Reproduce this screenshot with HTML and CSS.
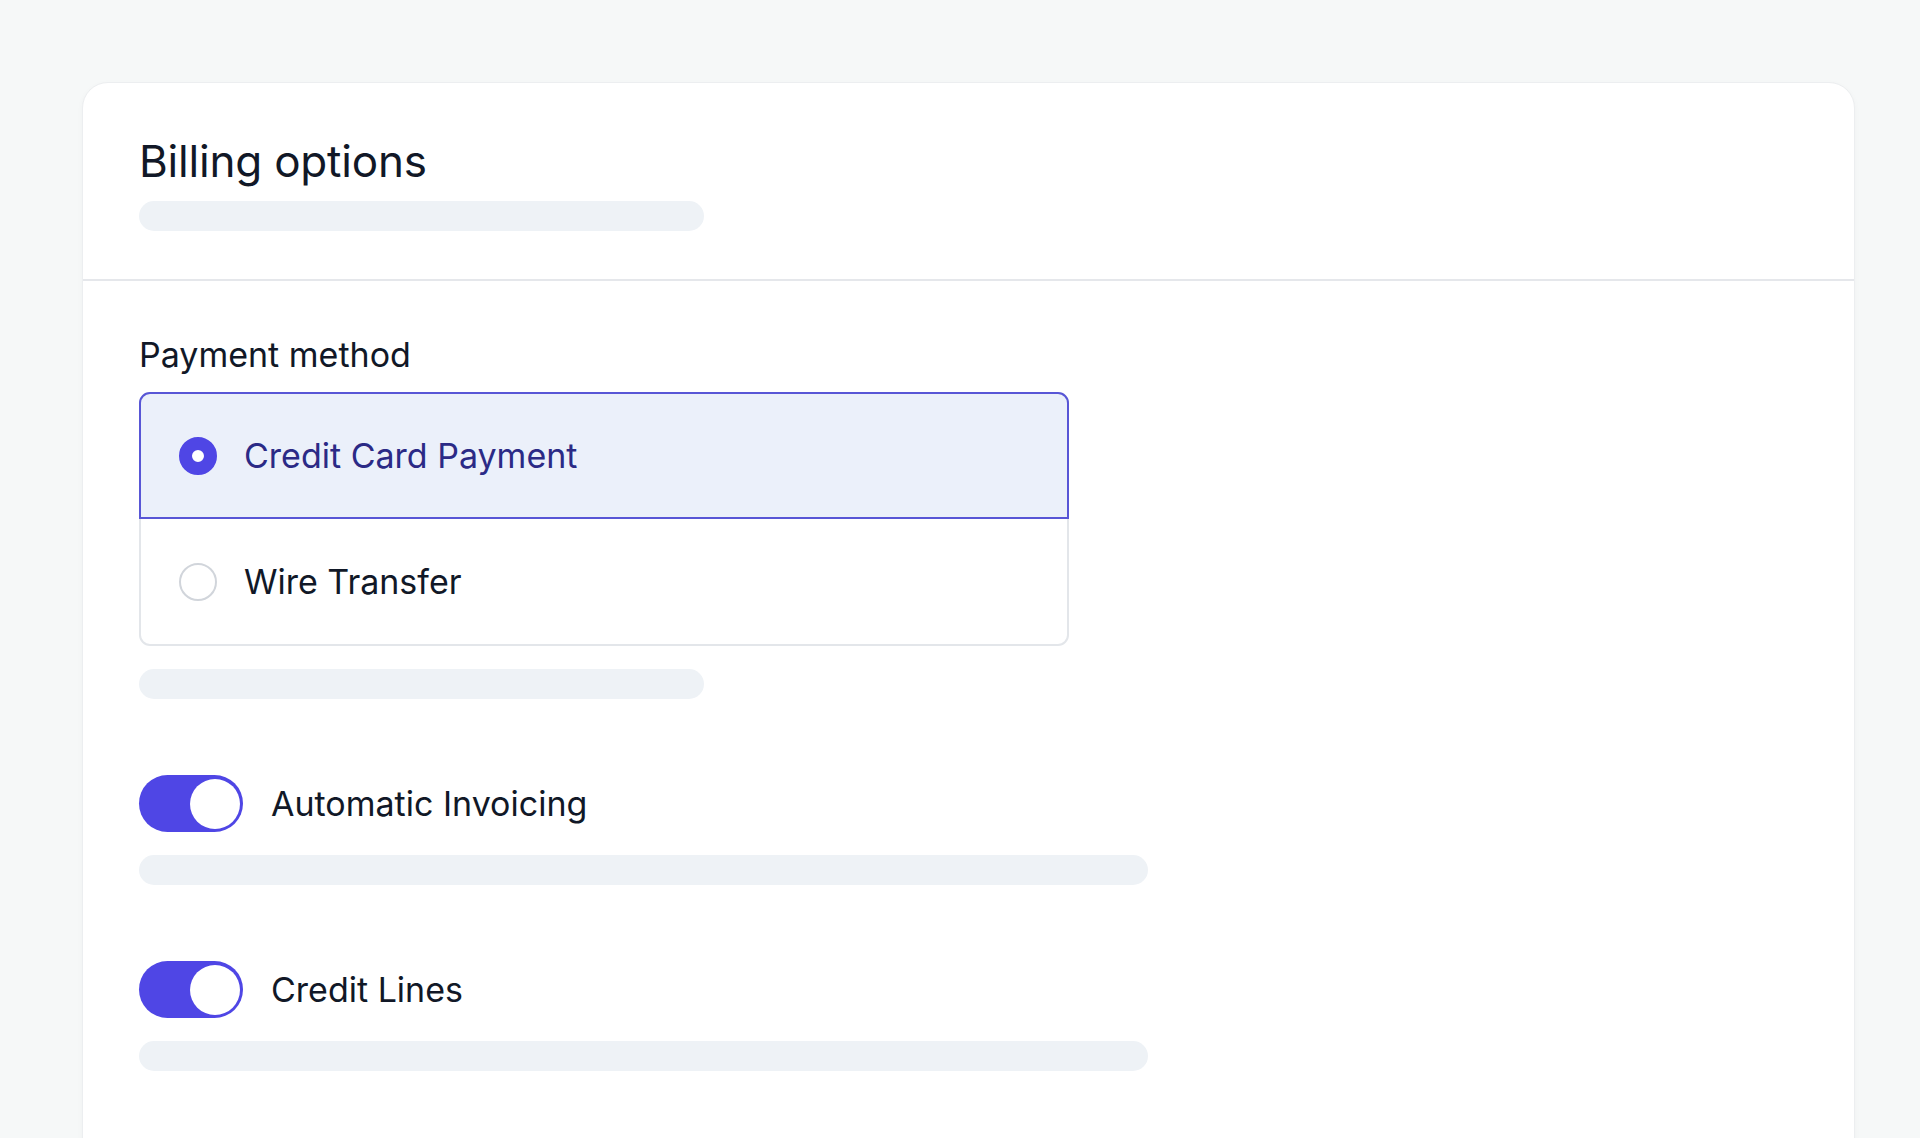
FILE: index.html
```html
<!DOCTYPE html>
<html lang="en">
<head>
    <meta charset="UTF-8">
    <title>Billing options</title>
    <link rel="stylesheet" href="styles.css">
</head>
<body>
    <div class="card">
        <div class="card-header">
            <h1 class="card-title">Billing options</h1>
            <div class="skeleton skeleton-short"></div>
        </div>
        <div class="card-body">
            <div class="field">
                <div class="field-label">Payment method</div>
                <div class="radio-group">
                    <label class="radio-option selected">
                        <span class="radio checked"></span>
                        <span class="radio-text">Credit Card Payment</span>
                    </label>
                    <label class="radio-option">
                        <span class="radio"></span>
                        <span class="radio-text">Wire Transfer</span>
                    </label>
                </div>
                <div class="skeleton skeleton-short"></div>
            </div>

            <div class="field">
                <div class="toggle-row">
                    <span class="toggle on"><span class="toggle-knob"></span></span>
                    <span class="toggle-label">Automatic Invoicing</span>
                </div>
                <div class="skeleton skeleton-long"></div>
            </div>

            <div class="field">
                <div class="toggle-row">
                    <span class="toggle on"><span class="toggle-knob"></span></span>
                    <span class="toggle-label">Credit Lines</span>
                </div>
                <div class="skeleton skeleton-long"></div>
            </div>
        </div>
    </div>
</body>
</html>
```

FILE: styles.css
```css
body {
    margin: 0;
    padding: 82px 65px 0 82px;
    background: #f6f8f8;
    font-family: Inter, "Noto Sans", sans-serif;
    color: #111827;
    height: 100vh;
    box-sizing: border-box;
    overflow: hidden;
}
.card {
    background: #fff;
    border: 1px solid #eceef0;
    border-radius: 26px;
    box-shadow: 0 2px 6px rgba(0, 0, 0, 0.03);
    min-height: 1200px;
}
.card-header {
    padding: 48px 56px 48px;
    border-bottom: 2px solid #e5e7eb;
}
.card-title {
    margin: 0 0 10px;
    font-size: 44px;
    font-weight: 400;
    line-height: 60px;
    letter-spacing: -0.2px;
}
.skeleton {
    height: 30px;
    background: #eef2f6;
    border-radius: 15px;
}
.skeleton-short {
    width: 565px;
}
.skeleton-long {
    width: 1009px;
}
.card-body {
    padding: 50px 56px;
    display: flex;
    flex-direction: column;
    gap: 76px;
}
.field-label {
    font-size: 34px;
    line-height: 48px;
    font-weight: 400;
    margin-bottom: 13px;
}
.radio-group {
    width: 926px;
    border: 2px solid #e3e6ea;
    border-radius: 11px;
    margin-bottom: 23px;
}
.radio-option {
    display: flex;
    align-items: center;
    gap: 27px;
    height: 125px;
    padding: 0 38px;
    box-sizing: border-box;
    font-size: 34px;
}
.radio-option.selected {
    background: #ebf0fa;
    border: 2px solid #5856d6;
    border-radius: 11px 11px 0 0;
    margin: -2px -2px 0;
    height: 127px;
    color: #2b2a86;
}
.radio {
    width: 38px;
    height: 38px;
    border-radius: 50%;
    border: 2px solid #d1d5db;
    box-sizing: border-box;
    background: #fff;
    flex-shrink: 0;
}
.radio.checked {
    border: 13px solid #4f46e5;
}
.toggle-row {
    display: flex;
    align-items: center;
    gap: 28px;
    margin-bottom: 23px;
}
.toggle {
    width: 104px;
    height: 57px;
    border-radius: 29px;
    background: #e5e7eb;
    display: flex;
    align-items: center;
    padding: 0 3px;
    box-sizing: border-box;
}
.toggle.on {
    background: #4f46e5;
    justify-content: flex-end;
}
.toggle-knob {
    width: 50px;
    height: 50px;
    border-radius: 50%;
    background: #fff;
}
.toggle-label {
    font-size: 34px;
}
```
